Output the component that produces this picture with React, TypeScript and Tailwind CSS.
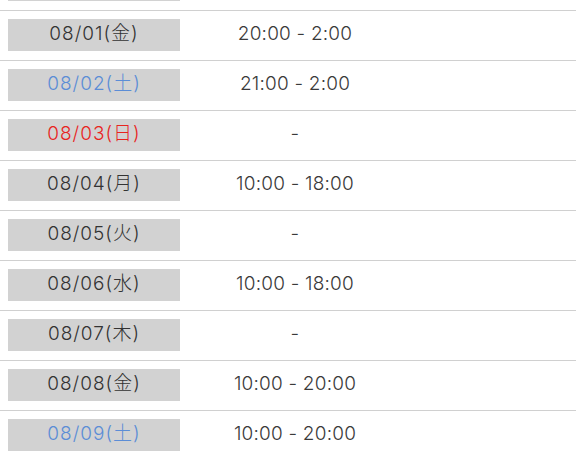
const rows: { date: string; time: string; tone?: "sat" | "sun" }[] = [
  { date: "", time: "" },
  { date: "08/01(金)", time: "20:00 - 2:00" },
  { date: "08/02(土)", time: "21:00 - 2:00", tone: "sat" },
  { date: "08/03(日)", time: "-", tone: "sun" },
  { date: "08/04(月)", time: "10:00 - 18:00" },
  { date: "08/05(火)", time: "-" },
  { date: "08/06(水)", time: "10:00 - 18:00" },
  { date: "08/07(木)", time: "-" },
  { date: "08/08(金)", time: "10:00 - 20:00" },
  { date: "08/09(土)", time: "10:00 - 20:00", tone: "sat" },
];

export default function App() {
  return (
    <div
      className="h-[452px] w-[576px] overflow-hidden bg-white"
      style={{ fontFamily: 'Inter, "Noto Sans CJK JP", sans-serif' }}
    >
      <div className="-mt-[39px]">
        {rows.map((r, i) => (
          <div
            key={i}
            className="flex items-center border-b border-[#d0d0d0] pt-[8px] pb-[9px]"
          >
            <div
              className={
                "ml-2 flex h-8 w-[172px] items-center justify-center bg-[#d2d2d2] pb-[1px] text-[19px] font-light tracking-[1px] " +
                (r.tone === "sat"
                  ? "text-[#5b8dd6]"
                  : r.tone === "sun"
                    ? "text-[#e8241e]"
                    : "text-[#333333]")
              }
            >
              {r.date}
            </div>
            <div className="w-[230px] pb-[1px] text-center text-[19px] font-light tracking-[0.2px] text-[#3a3a3a]">
              {r.time}
            </div>
          </div>
        ))}
      </div>
    </div>
  );
}
